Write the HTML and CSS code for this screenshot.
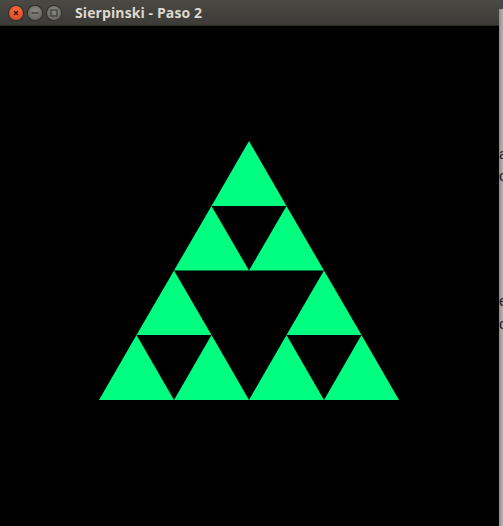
FILE: index.html
```html
<!DOCTYPE html>
<html>
<head>
<meta charset="utf-8">
<link rel="stylesheet" href="styles.css">
</head>
<body>
<div class="screen">
  <div class="window">
    <div class="titlebar">
      <div class="buttons">
        <span class="btn close">
          <svg width="14" height="14" viewBox="0 0 14 14"><path d="M5 5 L9 9 M9 5 L5 9" stroke="#3a1208" stroke-width="1.3"/></svg>
        </span>
        <span class="btn">
          <svg width="14" height="14" viewBox="0 0 14 14"><path d="M3.5 7 H10.5" stroke="#3a3a36" stroke-width="1.3"/></svg>
        </span>
        <span class="btn">
          <svg width="14" height="14" viewBox="0 0 14 14"><rect x="4" y="4" width="6" height="6" fill="none" stroke="#3a3a36" stroke-width="1.2"/></svg>
        </span>
      </div>
      <span class="title">Sierpinski - Paso 2</span>
    </div>
    <div class="canvas">
      <svg width="499" height="500" viewBox="0 0 499 500">
        <g fill="#00ff80">
          <polygon points="249,115 211.5,180 286.5,180"/>
          <polygon points="211.5,180 174,244.5 249,244.5"/>
          <polygon points="286.5,180 249,244.5 324,244.5"/>
          <polygon points="174,244.5 136.5,309 211.5,309"/>
          <polygon points="136.5,309 99,374 174,374"/>
          <polygon points="211.5,309 174,374 249,374"/>
          <polygon points="324,244.5 286.5,309 361.5,309"/>
          <polygon points="286.5,309 249,374 324,374"/>
          <polygon points="361.5,309 324,374 399,374"/>
        </g>
      </svg>
    </div>
  </div>
  <div class="strip">
    <div class="strip-top"></div>
    <div class="strip-text">
      <span class="l1">a</span>
      <span class="l2">c</span>
      <span class="l3">e</span>
      <span class="l4">c</span>
    </div>
  </div>
</div>
</body>
</html>
```

FILE: styles.css
```css
html, body {
  margin: 0;
  padding: 0;
  background: #000;
  overflow: hidden;
}
.screen {
  display: flex;
  width: 503px;
  height: 526px;
}
.window {
  width: 499px;
  display: flex;
  flex-direction: column;
  background: #000;
}
.titlebar {
  height: 25px;
  flex: none;
  display: flex;
  align-items: center;
  background: linear-gradient(#4a4944, #3c3b37);
  border-bottom: 1px solid #2b2a27;
}
.buttons {
  display: flex;
  gap: 5px;
  margin-left: 9px;
}
.btn {
  width: 14px;
  height: 14px;
  border-radius: 50%;
  background: radial-gradient(circle at 50% 35%, #8a8a84, #5e5d58);
  box-shadow: 0 0 0 1px #2f2e2b;
  display: block;
}
.btn svg { display: block; }
.btn.close {
  background: radial-gradient(circle at 50% 35%, #f26d44, #d9431a);
}
.title {
  margin-left: 14px;
  font-family: "Open Sans", "DejaVu Sans", sans-serif;
  font-weight: 700;
  font-size: 14px;
  color: #dcd8cf;
  letter-spacing: 0.1px;
}
.canvas {
  flex: 1;
  background: #000;
}
.canvas svg { display: block; }
.strip {
  width: 4px;
  background: linear-gradient(90deg, #8e8e8e, #b4b4b4);
  overflow: hidden;
  display: flex;
  flex-direction: column;
}
.strip-top {
  height: 9px;
  background: #3b4a55;
  flex: none;
}
.strip-text {
  position: relative;
  flex: 1;
  font-family: "Liberation Sans", sans-serif;
  font-size: 15px;
  color: #1a1a2a;
}
.strip-text span {
  position: absolute;
  left: 0;
}
.l1 { top: 136px; }
.l2 { top: 158px; }
.l3 { top: 283px; }
.l4 { top: 306px; }
```
